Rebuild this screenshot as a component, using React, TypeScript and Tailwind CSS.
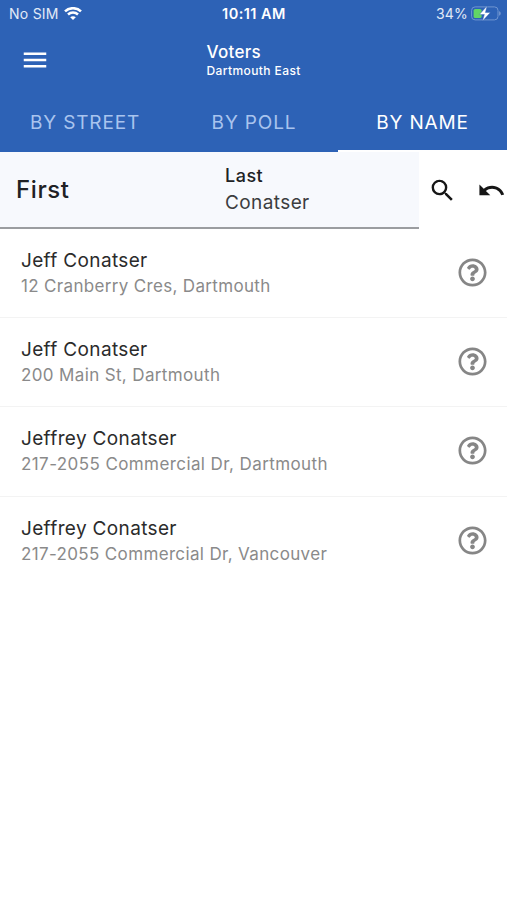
import React from "react";
import { MdMenu, MdSearch, MdUndo } from "react-icons/md";
import { FaRegQuestionCircle } from "react-icons/fa";

const voters = [
  { name: "Jeff Conatser", address: "12 Cranberry Cres, Dartmouth", addressTracking: "tracking-[0.33px]" },
  { name: "Jeff Conatser", address: "200 Main St, Dartmouth", addressTracking: "tracking-[0.36px]" },
  { name: "Jeffrey Conatser", address: "217-2055 Commercial Dr, Dartmouth", addressTracking: "tracking-[0.41px]" },
  { name: "Jeffrey Conatser", address: "217-2055 Commercial Dr, Vancouver", addressTracking: "tracking-[0.35px]" },
];

function WifiIcon() {
  return (
    <svg width="18" height="14" viewBox="0 0 18 14" fill="none" stroke="#fff" strokeWidth="2.5">
      <path d="M1 4.4C5.4.1 12.6.1 17 4.4" />
      <path d="M4 7.5c2.8-2.7 7.2-2.7 10 0" />
      <path d="M9 13.1 6.2 10.3c1.5-1.4 4.1-1.4 5.6 0z" fill="#fff" stroke="none" />
    </svg>
  );
}

function BatteryIcon() {
  return (
    <svg width="30" height="16" viewBox="0 0 30 16" fill="none">
      <rect x="0.6" y="0.9" width="26.4" height="13" rx="3.5" stroke="#7096d2" strokeWidth="1" />
      <path d="M28.2 5.3c1.9.6 1.9 3.8 0 4.4z" fill="#7f9fd3" />
      <rect x="2.6" y="2.9" width="8" height="9.2" rx="1.6" fill="#62d566" />
      <path d="M16 .1 8.4 8.5h5l-2 6.6L19.4 6.5h-5z" fill="#fff" stroke="#2d62b6" strokeWidth="0.4" />
    </svg>
  );
}

export default function App() {
  return (
    <div className="flex h-[900px] w-[507px] flex-col overflow-hidden bg-white font-['Inter',sans-serif] whitespace-nowrap">
      <header className="flex h-[152px] shrink-0 flex-col bg-[#2d62b6] text-white">
        <div className="grid h-7 grid-cols-3 items-center pr-[6px] pl-[9px] text-[14px] leading-none">
          <div className="flex items-center gap-[5px] text-[#e2eaf7]">
            <span className="tracking-[0.25px]">No SIM</span>
            <WifiIcon />
          </div>
          <span className="pr-[2px] text-center text-[14.5px] font-semibold tracking-[0.45px]">10:11 AM</span>
          <div className="flex items-center justify-end gap-[3px] text-[#e2eaf7]">
            <span className="tracking-[0.2px]">34%</span>
            <BatteryIcon />
          </div>
        </div>
        <div className="flex h-16 items-center pl-5">
          <MdMenu className="size-[30px]" />
          <div className="ml-[156.5px] flex flex-col pt-[2px]">
            <span className="text-[17px] leading-5 font-medium tracking-[0.3px]">Voters</span>
            <span className="text-[12px] leading-[18px] font-medium tracking-[0.4px]">Dartmouth East</span>
          </div>
        </div>
        <nav className="grid h-[60px] grid-cols-3 text-center text-[19px] leading-[57px] tracking-[0.85px]">
          <span className="pt-[2px] pl-px text-[#a9c4ee]">BY STREET</span>
          <span className="pt-[2px] pl-px text-[#a9c4ee]">BY POLL</span>
          <span className="h-[60px] border-b-2 border-white pt-[2px]">BY NAME</span>
        </nav>
      </header>
      <form className="flex h-[77px] shrink-0">
        <div className="flex w-[419px] items-center border-b-2 border-[#9b9da0] bg-[#f7f9fd] pl-4 text-[#202124]">
          <span className="w-[209px] text-[24px] font-medium tracking-[0.6px]">First</span>
          <div className="flex flex-col pb-[2px] leading-[27px]">
            <span className="text-[18px] font-medium tracking-[0.5px]">Last</span>
            <span className="text-[19px] tracking-[0.4px] text-[#3c3d40]">Conatser</span>
          </div>
        </div>
        <div className="flex items-center gap-[20px] pl-[9px] text-[#161616]">
          <MdSearch className="size-[29px] shrink-0" />
          <MdUndo className="size-[29px] shrink-0" />
        </div>
      </form>
      <ul>
        {voters.map((voter, i) => (
          <li key={i} className="flex h-[89.2px] items-center justify-between border-b border-[#f3f3f3] pr-5 pl-[21px] last:border-b-0">
            <div className="flex flex-col">
              <span className="text-[19px] leading-[25px] tracking-[0.35px] text-[#2b2b2b]">{voter.name}</span>
              <span className={"text-[17px] leading-[26px] text-[#8a8a8a] " + voter.addressTracking}>{voter.address}</span>
            </div>
            <FaRegQuestionCircle className="mb-[2px] size-[29px] text-[#868686]" />
          </li>
        ))}
      </ul>
    </div>
  );
}
